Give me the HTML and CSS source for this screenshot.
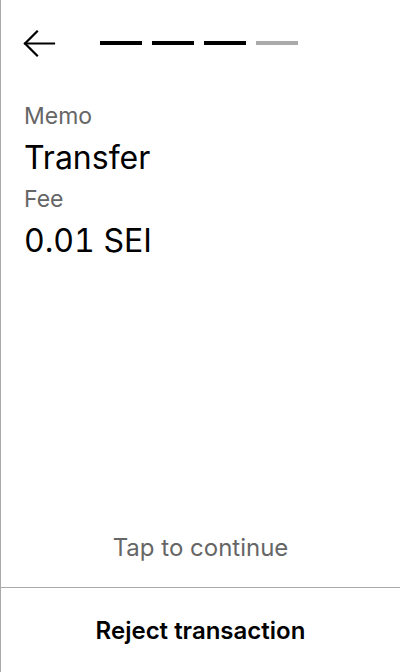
FILE: index.html
```html
<!DOCTYPE html>
<html lang="en">
<head>
<meta charset="utf-8">
<title>Confirm transaction</title>
<link rel="stylesheet" href="styles.css">
</head>
<body>
<div class="screen">
  <header class="header">
    <button class="back" aria-label="Back">
      <svg width="34" height="28" viewBox="0 0 34 28" fill="none" stroke="#000" stroke-width="2.2" stroke-linecap="square">
        <path d="M2 13.5 H31"/>
        <path d="M14 1.5 L2 13.5 L14 25.5"/>
      </svg>
    </button>
    <div class="steps">
      <span class="step done"></span>
      <span class="step done"></span>
      <span class="step done"></span>
      <span class="step"></span>
    </div>
  </header>
  <main class="details">
    <div class="label">Memo</div>
    <div class="value">Transfer</div>
    <div class="label">Fee</div>
    <div class="value num">0.01 SEI</div>
  </main>
  <div class="tap">Tap to continue</div>
  <footer class="footer">
    <button class="reject">Reject transaction</button>
  </footer>
</div>
</body>
</html>
```
FILE: styles.css
```css
* { box-sizing: border-box; }
html, body { margin: 0; padding: 0; background: #fff; }
body { font-family: Inter, "Noto Sans", sans-serif; color: #000; }
.screen {
  height: 672px;
  border-left: 1px solid #aaa;
  display: flex;
  flex-direction: column;
}
.header {
  display: flex;
  align-items: center;
  padding: 29px 0 0 22px;
  height: 58px;
  flex: none;
}
.back {
  border: 0;
  background: none;
  padding: 0;
  width: 34px;
  height: 28px;
  display: block;
  cursor: pointer;
}
.back svg { display: block; }
.steps {
  display: flex;
  gap: 10px;
  margin-left: 43px;
  margin-top: -2px;
}
.step {
  width: 42px;
  height: 4px;
  background: #aaa;
}
.step.done { background: #000; }
.details {
  padding: 44px 23px 0;
  flex: 1;
}
.label {
  font-size: 23px;
  line-height: 28px;
  color: #666;
}
.value {
  font-size: 32px;
  line-height: 38px;
  margin: 9px 0 8px;
}
.value.num {
  font-variant-numeric: tabular-nums;
}
.tap {
  text-align: center;
  font-size: 24px;
  color: #666;
  line-height: 29px;
  padding-bottom: 25px;
}
.footer {
  border-top: 1px solid #aaa;
  height: 85px;
  flex: none;
  display: flex;
  align-items: center;
  justify-content: center;
}
.reject {
  border: 0;
  background: none;
  font-family: inherit;
  font-size: 24px;
  font-weight: 600;
  color: #000;
  padding: 0;
  cursor: pointer;
}
```
